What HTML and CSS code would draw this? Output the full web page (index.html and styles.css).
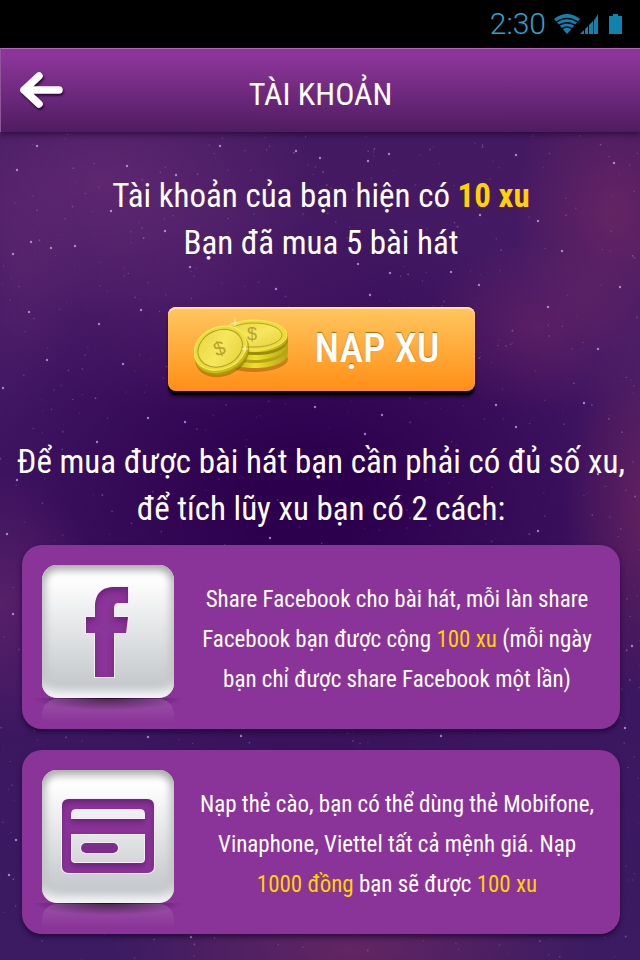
FILE: index.html
```html
<!DOCTYPE html>
<html lang="vi">
<head>
<meta charset="utf-8">
<meta name="viewport" content="width=device-width, initial-scale=1">
<title>Tài khoản</title>
<link rel="stylesheet" href="styles.css">
</head>
<body>
<svg class="stars" viewBox="0 0 640 960" preserveAspectRatio="xMidYMin slice" aria-hidden="true"></svg>

<div class="status">
  <span class="clock">2:30</span>
  <svg class="wifi" width="26" height="22" viewBox="0 0 26 22" aria-hidden="true">
    <path d="M0 6Q13-4 26 6L13 21Z" fill="#0f82ae"/>
    <path d="M1 10Q13 1 25 10M3 13.500Q13 6 23 13.500M6 17Q13 11 20 17" fill="none" stroke="#000" stroke-width="1.300"/>
  </svg>
  <svg class="signal" width="19" height="22" viewBox="0 0 19 22" aria-hidden="true">
    <path d="M0 21L4 17V21ZM5 16L8 13V21H5ZM9 12L13 8V21H9ZM14 7L15 6V6L18 1V21H14Z" fill="#0f82ae"/>
  </svg>
  <svg class="battery" width="13" height="22" viewBox="0 0 13 22" aria-hidden="true">
    <path d="M4 1h5v2h4v18H0V3h4z" fill="#0f82ae"/>
  </svg>
</div>

<header class="bar">
  <button class="back" type="button" aria-label="Quay lại">
    <svg width="46" height="40" viewBox="0 0 46 40" aria-hidden="true">
      <path d="M20 5L5 19L20 33M5 19H40" fill="none" stroke="#fff" stroke-width="7.500" stroke-linecap="round" stroke-linejoin="round"/>
    </svg>
  </button>
  <h1 class="title">TÀI KHOẢN</h1>
</header>

<main class="content">
  <p class="lead">Tài khoản của bạn hiện có <strong class="gold">10 xu</strong><br>Bạn đã mua 5 bài hát</p>

  <button class="topup" type="button">
    <svg width="100" height="64" viewBox="0 0 100 64" aria-hidden="true">
      <defs>
        <linearGradient id="face" x1="0" y1="0" x2="1" y2="1"><stop offset="0" stop-color="#e8d53c"/><stop offset=".5" stop-color="#f6e760"/><stop offset="1" stop-color="#e6d136"/></linearGradient>
        <linearGradient id="edge"><stop offset="0" stop-color="#9c9010"/><stop offset=".5" stop-color="#f0e02c"/><stop offset="1" stop-color="#b5a714"/></linearGradient>
      </defs>
      <ellipse cx="60" cy="42" rx="34" ry="13" fill="#7b4b00" opacity=".4"/>
      <path d="M28 33v4c0 9 15 14 33 14s33-6 33-15v-5z" fill="url(#edge)"/>
      <path d="M28 30v3c2 8 16 13 33 13s32-6 33-15v-4z" fill="#b3a514"/>
      <path d="M28 24v5c1 9 16 14 33 14s33-7 33-16v-5z" fill="url(#edge)"/>
      <path d="M28 22v2c2 9 16 14 34 14s31-6 32-15v-4z" fill="#9a8c0e"/>
      <path d="M27 17v4c1 9 16 14 34 14s33-6 33-15v-4z" fill="url(#edge)"/>
      <ellipse cx="60" cy="18" rx="33" ry="15" fill="#ecdb38" stroke="#f5ec69"/>
      <ellipse cx="60" cy="18" rx="28" ry="12" fill="url(#face)" stroke="#b3a22c"/>
      <text class="coin-sign" x="53" y="23" font-size="18">$</text>
      <g transform="rotate(-24 27 33)">
        <ellipse cx="26" cy="38" rx="28" ry="21" fill="#7b4b00" opacity=".4"/>
        <ellipse cx="27" cy="36" rx="28" ry="21" fill="#a99b0d"/>
        <ellipse cx="27" cy="34" rx="28" ry="21" fill="#ccba18"/>
        <ellipse cx="27" cy="31" rx="27" ry="21" fill="#ecdc38" stroke="#f6ed6c"/>
        <ellipse cx="27" cy="31" rx="23" ry="18" fill="url(#face)" stroke="#ae9d2b"/>
      </g>
      <text class="coin-sign" x="20" y="38" font-size="20" transform="rotate(-20 26 32)">$</text>
      <path d="M41 0l1 5 5 1-5 1-1 5-1-5-4-1 4-1zM51 28l1 3 3 1-3 1-1 3-1-3-3-1 3-1z" fill="#fff9cf" opacity=".6"/>
    </svg>
    <span class="topup-label">NẠP XU</span>
  </button>

  <p class="lead">Để mua được bài hát bạn cần phải có đủ số xu,<br>để tích lũy xu bạn có 2 cách:</p>

  <section class="cards">
    <article class="card">
      <div class="tile">
        <svg width="132" height="133" viewBox="0 0 132 133" aria-hidden="true">
          <defs><filter id="inset" x="-5%" y="-5%" width="110%" height="110%">
            <feOffset dy="4"/><feGaussianBlur stdDeviation="3"/><feComposite in2="SourceAlpha" operator="xor" result="o"/><feComposite in="o" in2="SourceAlpha" operator="in" result="s"/>
            <feFlood flood-color="#3d0c4b" flood-opacity=".5"/><feComposite in2="s" operator="in" result="c"/>
            <feMerge><feMergeNode in="SourceGraphic"/><feMergeNode in="c"/></feMerge></filter></defs>
          <path class="lip" d="M53 112V68H44V52H53V43C53 28 60 22 73 22H86V38H76Q72 38 72 43V52H86L84 68H72V112Z"/>
          <path d="M53 112V68H44V52H53V43C53 28 60 22 73 22H86V38H76Q72 38 72 43V52H86L84 68H72V112Z" fill="#8a3499" filter="url(#inset)"/>
        </svg>
      </div>
      <p class="note">Share Facebook cho bài hát, mỗi làn share<br>Facebook bạn được cộng <span class="gold">100 xu</span> (mỗi ngày<br>bạn chỉ được share Facebook một lần)</p>
    </article>

    <article class="card">
      <div class="tile">
        <svg width="132" height="133" viewBox="0 0 132 133" aria-hidden="true">
          <path class="lip" fill-rule="evenodd" d="M27 29H105Q112 29 112 36V96Q112 103 105 103H27Q20 103 20 96V36Q20 29 27 29ZM29 49H103V44Q103 39 98 39H34Q29 39 29 44ZM29 64V89Q29 93 33 93H99Q103 93 103 89V64Z"/>
          <path d="M27 29H105Q112 29 112 36V96Q112 103 105 103H27Q20 103 20 96V36Q20 29 27 29ZM29 49H103V44Q103 39 98 39H34Q29 39 29 44ZM29 64V89Q29 93 33 93H99Q103 93 103 89V64Z" fill="#8a3499" fill-rule="evenodd" filter="url(#inset)"/>
          <rect class="lip" x="39" y="73" width="37" height="10" rx="5"/>
          <rect x="39" y="73" width="37" height="10" rx="5" fill="#7c2c8b"/>
        </svg>
      </div>
      <p class="note">Nạp thẻ cào, bạn có thể dùng thẻ Mobifone,<br>Vinaphone, Viettel tất cả mệnh giá. Nạp<br><span class="gold">1000 đồng</span> bạn sẽ được <span class="gold">100 xu</span></p>
    </article>
  </section>
</main>
<script src="stars.js"></script>
</body>
</html>
```
FILE: styles.css
```css
* { box-sizing: border-box; }

body {
  margin: 0;
  min-height: 100vh;
  position: relative;
  overflow-x: hidden;
  color: #fff;
  font-family: "Roboto Condensed", "Liberation Sans Narrow", Roboto, "Noto Sans", sans-serif;
  background:
    radial-gradient(ellipse 16% 15% at 96% 22%, rgba(118, 42, 100, .65), rgba(118, 42, 100, .35) 45%, transparent),
    radial-gradient(ellipse 18% 9% at 84% 34%, rgba(115, 40, 105, .5), rgba(115, 40, 105, .25) 50%, transparent),
    radial-gradient(ellipse 14% 20% at 102% 53%, rgba(115, 40, 95, .7), rgba(115, 40, 95, .35) 50%, transparent),
    radial-gradient(ellipse 34% 14% at 16% 19%, rgba(105, 45, 118, .7), rgba(105, 45, 118, .35) 50%, transparent),
    radial-gradient(ellipse 30% 12% at 30% 31%, rgba(95, 38, 115, .4), transparent),
    radial-gradient(ellipse 10% 14% at 3% 28%, rgba(100, 40, 115, .4), transparent),
    radial-gradient(ellipse 16% 14% at 0% 63%, rgba(100, 38, 110, .7), transparent),
    radial-gradient(ellipse 38% 7% at 55% 99%, rgba(115, 42, 98, .7), rgba(115, 42, 98, .35) 50%, transparent),
    radial-gradient(ellipse 60% 30% at 48% 52%, #2d004e 15%, transparent),
    linear-gradient(#43195f, #451a66 40%, #3c1560 65%, #3b1b62);
}

.stars {
  position: absolute;
  inset: 0;
  width: 100%;
  height: 100%;
  z-index: -1;
}

.status {
  display: flex;
  align-items: center;
  justify-content: flex-end;
  height: 48px;
  padding-right: 18px;
  background: #000;
}

.clock {
  margin-right: 8px;
  color: #2fa0cc;
  font: 300 30px/48px Roboto, sans-serif;
}

.battery { margin-left: 10px; }

.bar {
  display: grid;
  grid-template-columns: 80px 1fr 80px;
  align-items: center;
  height: 84px;
  border-top: 1px solid #b267bc;
  border-left: 1px solid #91559b;
  background: linear-gradient(#8b3599 10%, #4f1c60);
  box-shadow: 0 2px 6px rgba(20, 0, 35, .6);
}

.back {
  display: flex;
  padding: 0 0 0 18px;
  border: 0;
  background: none;
  filter: drop-shadow(1px 2px 1px rgba(25, 0, 35, .8));
}

.title {
  margin: 0;
  padding-top: 6px;
  font-size: 32px;
  font-weight: 400;
  line-height: 40px;
  text-align: center;
}

.content {
  display: flex;
  flex-direction: column;
  align-items: center;
  padding: 40px 20px 26px 22px;
}

.lead {
  margin: 0;
  font-size: 33px;
  line-height: 47px;
  text-align: center;
  white-space: nowrap;
}

.gold { color: #ffd200; }

.topup {
  display: flex;
  align-items: center;
  justify-content: space-between;
  width: 307px;
  height: 84px;
  margin: 41px 0 47px;
  padding: 0 35px 0 26px;
  border: 0;
  border-radius: 8px;
  color: #fff;
  background: linear-gradient(#ffc75f, #ff8f16);
  box-shadow: inset 0 2px 1px #ffe1a3, 0 4px 0 #000, 0 6px 3px rgba(0, 0, 0, .5);
  font-family: inherit;
}

.coin-sign {
  fill: #b8a328;
  font-family: "Liberation Sans", sans-serif;
}

.topup-label {
  font-size: 40px;
  font-weight: 500;
  line-height: 56px;
  text-shadow: 0 -1px 1px #a56918;
}

.cards {
  display: flex;
  flex-direction: column;
  gap: 21px;
  align-self: stretch;
  margin-top: 13px;
}

.card {
  display: flex;
  align-items: flex-start;
  min-height: 184px;
  padding: 20px;
  border-radius: 20px;
  background: #8a3499;
  box-shadow: 0 3px 5px rgba(20, 0, 35, .6);
}

.tile {
  position: relative;
  flex: none;
  width: 132px;
  height: 133px;
  border-radius: 15px;
  background: linear-gradient(#fff 10%, #c5c9cc 90%);
  box-shadow: inset 0 7px 9px -2px #aaa, inset 0 -10px 8px -3px #f5f6f7, inset 7px 0 8px -4px #bfc2c4, inset -7px 0 8px -4px #bfc2c4;
}

.tile svg { display: block; }

.tile::before {
  content: "";
  position: absolute;
  left: -10px;
  right: -10px;
  top: 133px;
  height: 14px;
  background: radial-gradient(ellipse 50% 12px at 50% 0, rgba(30, 0, 35, .9), transparent);
}

.tile::after {
  content: "";
  position: absolute;
  left: 0;
  right: 0;
  top: 134px;
  height: 24px;
  border-radius: 15px 15px 0 0;
  background: linear-gradient(rgba(255, 255, 255, .14), transparent);
}

.lip {
  fill: #fff;
  stroke: #f4edf6;
  stroke-width: 2px;
}

.note {
  flex: 1;
  margin: 0;
  padding-top: 15px;
  padding-left: 20px;
  font-size: 23px;
  line-height: 40px;
  text-align: center;
  white-space: nowrap;
}
```
FILE: stars.js
```js
const sky = document.querySelector(".stars");

// Bright stars: x, y
const bright = [
  [17,170],[37,146],[127,166],[296,151],[320,158],[368,161],[389,154],[516,155],[614,163],[111,211],
  [176,175],[220,146],[13,254],[51,248],[31,242],[75,246],[190,267],[165,231],[390,273],[451,272],
  [538,221],[562,251],[620,287],[276,289],[370,295],[548,307],[29,312],[141,310],[99,324],[123,364],
  [47,360],[598,349],[3,388],[185,422],[148,418],[315,407],[382,415],[516,427],[365,434],[97,442],
  [17,480],[598,474],[584,403],[538,531],[270,538],[13,614],[7,534],[16,840],[191,937],[625,728],
  [441,736],[148,737],[241,736],[613,562],[632,646],[9,875],[480,215],[479,285],[496,405],[358,264]
];

let seed = 41;
function random() {
  seed = (seed * 16807) % 2147483647;
  return seed / 2147483647;
}

function addStar(x, y, r, opacity) {
  const dot = document.createElementNS("http://www.w3.org/2000/svg", "circle");
  dot.setAttribute("cx", x);
  dot.setAttribute("cy", y);
  dot.setAttribute("r", r);
  dot.setAttribute("fill", "#e6d5ee");
  dot.setAttribute("opacity", opacity);
  sky.append(dot);
}

bright.forEach(([x, y]) => addStar(x, y, 1.2, 0.6));
for (let i = 0; i < 800; i++) {
  addStar(random() * 640, 134 + random() * 826, 0.5 + random() * 0.5, 0.08 + random() * 0.22);
}
```
